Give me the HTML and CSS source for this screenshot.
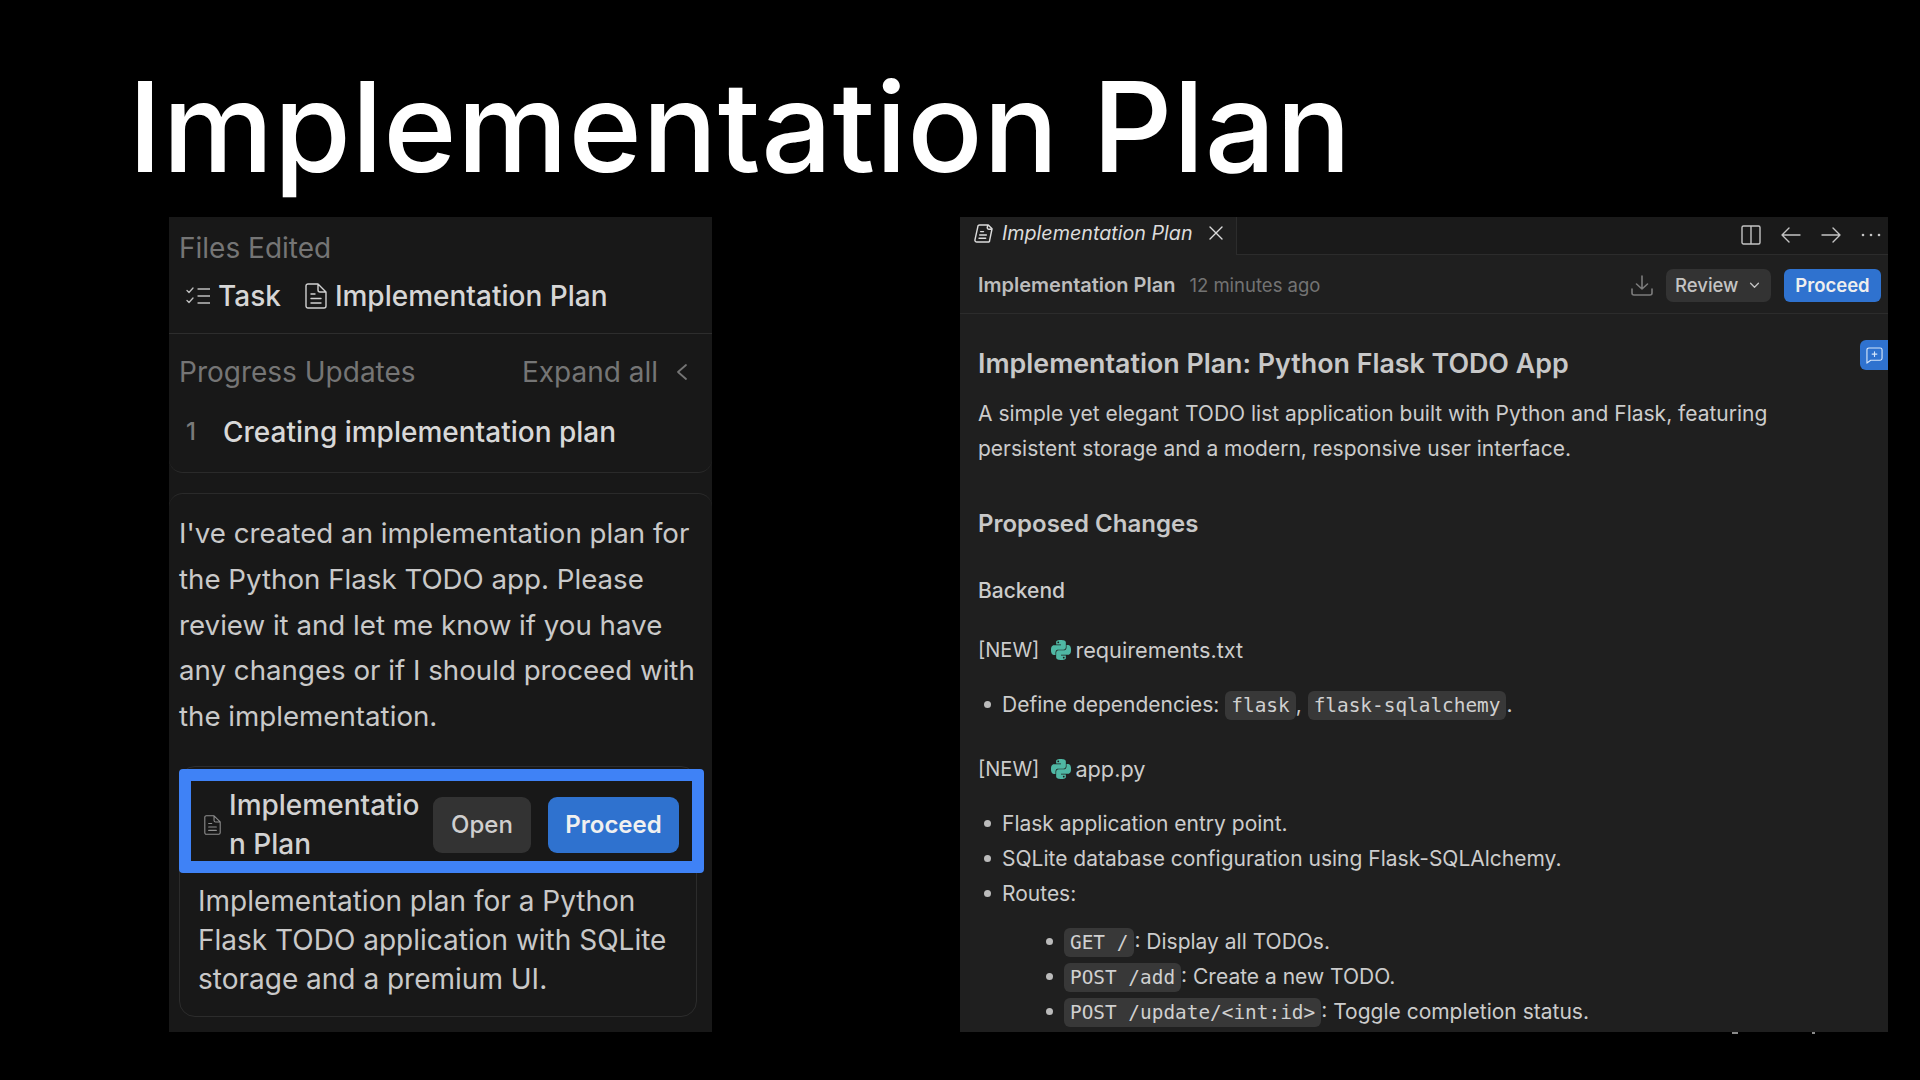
FILE: index.html
```html
<!DOCTYPE html>
<html lang="en">
<head>
<meta charset="utf-8">
<title>Implementation Plan</title>
<link rel="stylesheet" href="styles.css">
</head>
<body>
<svg class="defs" width="0" height="0" aria-hidden="true">
  <symbol id="py" viewBox="0 0 24 24"><path fill="#4fb8a4" d="M14.25.18l.9.2.73.26.59.3.45.32.34.34.25.34.16.33.1.3.04.26.02.2-.01.13V8.5l-.05.63-.13.55-.21.46-.26.38-.3.31-.33.25-.35.19-.35.14-.33.1-.3.07-.26.04-.21.02H8.77l-.69.05-.59.14-.5.22-.41.27-.33.32-.27.35-.2.36-.15.37-.1.35-.07.32-.04.27-.02.21v3.06H3.17l-.21-.03-.28-.07-.32-.12-.35-.18-.36-.26-.36-.36-.35-.46-.32-.59-.28-.73-.21-.88-.14-1.05-.05-1.23.06-1.22.16-1.04.24-.87.32-.71.36-.57.4-.44.42-.33.42-.24.4-.16.36-.1.32-.05.24-.01h.16l.06.01h8.16v-.83H6.18l-.01-2.75-.02-.37.05-.34.11-.31.17-.28.25-.26.31-.23.38-.2.44-.18.51-.15.58-.12.64-.1.71-.06.77-.04.84-.02 1.27.05zm-6.3 1.98l-.23.33-.08.41.08.41.23.34.33.22.41.09.41-.09.33-.22.23-.34.08-.41-.08-.41-.23-.33-.33-.22-.41-.09-.41.09zm13.09 3.95l.28.06.32.12.35.18.36.27.36.35.35.47.32.59.28.73.21.88.14 1.04.05 1.23-.06 1.23-.16 1.04-.24.86-.32.71-.36.57-.4.45-.42.33-.42.24-.4.16-.36.09-.32.05-.24.02-.16-.01h-8.22v.82h5.84l.01 2.76.02.36-.05.34-.11.31-.17.29-.25.25-.31.24-.38.2-.44.17-.51.15-.58.13-.64.09-.71.07-.77.04-.84.01-1.27-.04-1.07-.14-.9-.2-.73-.25-.59-.3-.45-.33-.34-.34-.25-.34-.16-.33-.1-.3-.04-.25-.02-.2.01-.13v-5.34l.05-.64.13-.54.21-.46.26-.38.3-.32.33-.24.35-.2.35-.14.33-.1.3-.06.26-.04.21-.02.13-.01h5.84l.69-.05.59-.14.5-.21.41-.28.33-.32.27-.35.2-.36.15-.36.1-.35.07-.32.04-.28.02-.21V6.07h2.09l.14.01zm-6.47 14.25l-.23.33-.08.41.08.41.23.33.33.23.41.08.41-.08.33-.23.23-.33.08-.41-.08-.41-.23-.33-.33-.23-.41-.08-.41.08z"/></symbol>
  <symbol id="doc" viewBox="0 0 22 26"><path fill="none" stroke="currentColor" stroke-width="1.4" stroke-linejoin="round" stroke-linecap="round" d="M3 1h10l8 8v14a2 2 0 0 1-2 2H3a2 2 0 0 1-2-2V3a2 2 0 0 1 2-2zM13 1v6a2 2 0 0 0 2 2h6M6 11h4M6 15.5h10M6 20h10"/></symbol>
</svg>

<main class="slide">
  <h1 class="title">Implementation Plan</h1>
  <div class="panels">

    <section class="chat">
      <div class="files">
        <div class="muted-line">Files Edited</div>
        <div class="file-row">
          <span class="file-item">
            <svg class="ic-task" viewBox="0 0 24 18" aria-hidden="true"><path fill="none" stroke="currentColor" stroke-width="1.3" stroke-linecap="round" stroke-linejoin="round" d="M1 3.5l2 2 4-4.5M1 13.5l2 2 4-4.5M12 2h12M12 9h12M12 16h12"/></svg>
            Task
          </span>
          <span class="file-item">
            <svg class="ic-doc"><use href="#doc"/></svg>
            Implementation Plan
          </span>
        </div>
      </div>
      <div class="progress">
        <div class="progress-head">
          <span>Progress Updates</span>
          <span class="expand">Expand all
            <svg class="ic-chev" viewBox="0 0 12 18" aria-hidden="true"><path fill="none" stroke="currentColor" stroke-width="1.8" stroke-linecap="round" stroke-linejoin="round" d="M10 2L2 9l8 7"/></svg>
          </span>
        </div>
        <div class="step"><span class="step-no">1</span><span>Creating implementation plan</span></div>
      </div>
      <div class="reply">
        <p class="reply-text">I've created an implementation plan for the Python Flask TODO app. Please review it and let me know if you have any changes or if I should proceed with the implementation.</p>
        <div class="file-card">
          <div class="highlight"></div>
          <div class="card-head">
            <svg class="ic-doc-small"><use href="#doc"/></svg>
            <span class="card-name">Implementation Plan</span>
            <span class="btn btn-open">Open</span>
            <span class="btn btn-go">Proceed</span>
          </div>
          <p class="card-desc">Implementation plan for a Python Flask TODO application with SQLite storage and a premium UI.</p>
        </div>
      </div>
    </section>

    <section class="editor">
      <div class="tabbar">
        <div class="tab">
          <svg class="ic-tab" viewBox="0 0 20 20" aria-hidden="true"><path fill="none" stroke="currentColor" stroke-width="1.5" stroke-linejoin="round" stroke-linecap="round" d="M6 1h9l4 4-2.5 12a2 2 0 0 1-2 2H3a2 2 0 0 1-2-2.4L4 3a2 2 0 0 1 2-2zM14.5 1l-.6 3a1.500 1.500 0 0 0 1.500 1.500H19M7 8h3M6 11.500h7M5.300 15h7"/></svg>
          <span class="tab-label">Implementation Plan</span>
          <svg class="ic-x" viewBox="0 0 14 14" aria-hidden="true"><path fill="none" stroke="currentColor" stroke-width="1.4" stroke-linecap="round" d="M1 1l12 12M13 1L1 13"/></svg>
        </div>
        <div class="tab-tools">
          <svg class="ic-split" viewBox="0 0 20 20" aria-hidden="true"><path fill="none" stroke="currentColor" stroke-width="1.4" d="M2.500 1h15A1.500 1.500 0 0 1 19 2.500v15a1.500 1.500 0 0 1-1.500 1.500h-15A1.500 1.500 0 0 1 1 17.500v-15A1.500 1.500 0 0 1 2.500 1zM10 1v18"/></svg>
          <svg class="ic-arrow" viewBox="0 0 20 16" aria-hidden="true"><path fill="none" stroke="currentColor" stroke-width="1.4" stroke-linecap="round" stroke-linejoin="round" d="M19 8H1M8 1L1 8l7 7"/></svg>
          <svg class="ic-arrow" viewBox="0 0 20 16" aria-hidden="true"><path fill="none" stroke="currentColor" stroke-width="1.4" stroke-linecap="round" stroke-linejoin="round" d="M1 8h18M12 1l7 7-7 7"/></svg>
          <svg class="ic-dots" viewBox="0 0 20 4" aria-hidden="true"><circle cx="2" cy="2" r="1.300" fill="currentColor"/><circle cx="10" cy="2" r="1.300" fill="currentColor"/><circle cx="18" cy="2" r="1.300" fill="currentColor"/></svg>
        </div>
      </div>
      <div class="doc-head">
        <strong class="doc-title">Implementation Plan</strong>
        <span class="doc-time">12 minutes ago</span>
        <svg class="ic-dl" viewBox="0 0 22 21" aria-hidden="true"><path fill="none" stroke="currentColor" stroke-width="1.600" stroke-linecap="round" stroke-linejoin="round" d="M11 1v13M5.500 9l5.500 5 5.500-5M1 14v4a2 2 0 0 0 2 2h16a2 2 0 0 0 2-2v-4"/></svg>
        <span class="review">Review
          <svg class="ic-down" viewBox="0 0 12 8" aria-hidden="true"><path fill="none" stroke="currentColor" stroke-width="1.500" stroke-linecap="round" stroke-linejoin="round" d="M1.500 1.500L6 6l4.500-4.500"/></svg>
        </span>
        <span class="doc-go">Proceed</span>
      </div>
      <div class="doc-body">
        <div class="comment-btn">
          <svg viewBox="0 0 18 18" aria-hidden="true"><path fill="none" stroke="currentColor" stroke-width="1.200" stroke-linejoin="round" stroke-linecap="round" d="M3 1h12a2 2 0 0 1 2 2v9a2 2 0 0 1-2 2H5l-4 3V3a2 2 0 0 1 2-2zM9 5v5M6.500 7.500h5"/></svg>
        </div>
        <h2 class="h-main">Implementation Plan: Python Flask TODO App</h2>
        <p class="lead">A simple yet elegant TODO list application built with Python and Flask, featuring persistent storage and a modern, responsive user interface.</p>
        <h3 class="h-sec">Proposed Changes</h3>
        <h4 class="h-sub">Backend</h4>
        <div class="new-file"><span class="tag">[NEW]</span><svg class="ic-py"><use href="#py"/></svg><span class="fname">requirements.txt</span></div>
        <ul class="list list-one">
          <li>Define dependencies: <code>flask</code>, <code>flask-sqlalchemy</code>.</li>
        </ul>
        <div class="new-file"><span class="tag">[NEW]</span><svg class="ic-py"><use href="#py"/></svg><span class="fname">app.py</span></div>
        <ul class="list list-two">
          <li>Flask application entry point.</li>
          <li>SQLite database configuration using Flask-SQLAlchemy.</li>
          <li>Routes:
            <ul class="sublist">
              <li><code>GET /</code>: Display all TODOs.</li>
              <li><code>POST /add</code>: Create a new TODO.</li>
              <li><code>POST /update/&lt;int:id&gt;</code>: Toggle completion status.</li>
            </ul>
          </li>
        </ul>
      </div>
    </section>

  </div>
</main>
<div class="stub stub-a"></div>
<div class="stub stub-b"></div>
</body>
</html>
```
FILE: styles.css
```css
* { box-sizing: border-box; }
html, body { margin: 0; height: 1080px; background: #000; overflow: hidden; }
body { font-family: Inter, "Noto Sans", sans-serif; position: relative; }
.defs { position: absolute; }
p, h1, h2, h3, h4, ul { margin: 0; padding: 0; }

.slide { display: flex; flex-direction: column; height: 1080px; }
.title {
  font-family: Inter, sans-serif;
  font-weight: 500;
  font-size: 125px;
  line-height: 151px;
  letter-spacing: 0.35px;
  color: #fff;
  padding: 51px 0 0 128px;
  height: 217px;
}
.panels { display: flex; padding-left: 169px; gap: 248px; }

/* left */
.chat { width: 543px; height: 815px; background: #181818; overflow: hidden; flex: none; font-size: 28px; line-height: 40px; }
.files { padding: 11px 10px 0; border-bottom: 1px solid #2d2d2d; height: 117px; }
.muted-line { color: #757575; }
.file-row { display: flex; margin-top: 8px; color: #d6d6d6; gap: 24px; padding-left: 7px; font-weight: 500; }
.file-item { display: flex; align-items: center; gap: 8px; }
.ic-task { width: 24px; height: 18px; color: #bdbdbd; }
.ic-doc { width: 22px; height: 26px; color: #d0d0d0; }
.progress { padding: 18px 0 0 10px; height: 139px; border-bottom: 1px solid #2a2a2a; border-radius: 0 0 14px 14px; }
.progress-head { display: flex; justify-content: space-between; color: #757575; padding-right: 24px; }
.expand { display: flex; align-items: center; gap: 18px; }
.ic-chev { width: 12px; height: 18px; }
.step { display: flex; margin-top: 20px; color: #d8d8d8; font-weight: 500; padding-left: 7px; }
.step-no { width: 37px; color: #7a7a7a; font-size: 24px; }
.reply { margin-top: 20px; border-top: 1px solid #2a2a2a; border-radius: 14px 14px 0 0; padding: 17px 10px 0; position: relative; }
.reply-text { font-size: 27.700px; line-height: 45.800px; color: #c9c9c9; width: 530px; }
.file-card { position: relative; width: 518px; margin: 26px 0 0; border: 1px solid #2c2c2c; border-radius: 16px; height: 251px; font-size: 28px; line-height: 39px; color: #c9c9c9; }
.highlight { position: absolute; top: 2px; left: -1px; width: 525px; height: 104px; border: 12px solid #3f82f6; border-radius: 4px; }
.card-head { display: flex; align-items: center; padding: 19px 0 0 24px; color: #d2d2d2; font-weight: 500; }
.ic-doc-small { width: 17px; height: 20px; color: #8f8f8f; flex: none; margin-right: 8px; }
.card-name { width: 191px; word-break: break-all; flex: none; margin-right: 13px; }
.btn { height: 56px; border-radius: 9px; display: flex; align-items: center; justify-content: center; font-size: 24px; }
.btn-open { width: 98px; background: #333; color: #cfcfcf; margin-right: 17px; }
.btn-go { width: 131px; background: #2f72cf; color: #f0f0f0; font-weight: 600; }
.card-desc { padding: 18px 18px 0; }

/* right */
.editor { width: 928px; height: 815px; background: #1f1f1f; overflow: hidden; flex: none; color: #cccccc; font-size: 21px; }
.tabbar { display: flex; justify-content: space-between; height: 38px; background: #1a1a1a; border-bottom: 1px solid #2c2c2c; }
.tab { width: 277px; height: 38px; background: #1f1f1f; border-right: 1px solid #2c2c2c; display: flex; align-items: center; padding: 0 0 6px 14px; color: #dcdcdc; }
.ic-tab { width: 19px; height: 19px; flex: none; margin-right: 9px; }
.tab-label { font-style: italic; font-size: 19.700px; width: 207px; flex: none; }
.ic-x { width: 14px; height: 14px; }
.tab-tools { display: flex; align-items: center; gap: 20px; padding: 0 7px 2px 0; color: #c4c4c4; }
.ic-split { width: 20px; height: 20px; }
.ic-arrow { width: 20px; height: 16px; }
.ic-dots { width: 20px; height: 4px; }
.doc-head { display: flex; align-items: center; height: 59px; padding: 2px 7px 0 18px; border-bottom: 1px solid #2c2c2c; }
.doc-title { font-weight: 600; font-size: 20px; color: #bdbdbd; }
.doc-time { margin-left: 14px; font-size: 18.500px; color: #737373; flex: 1; }
.ic-dl { width: 22px; height: 21px; color: #7c7c7c; margin-right: 13px; }
.review { width: 105px; height: 33px; background: #333; border-radius: 7px; display: flex; align-items: center; padding-left: 9px; gap: 11px; font-size: 18.500px; font-weight: 500; color: #c4c4c4; margin-right: 13px; }
.ic-down { width: 11px; height: 7px; }
.doc-go { width: 97px; height: 33px; background: #2f72cf; border-radius: 6px; display: flex; align-items: center; justify-content: center; font-size: 18.500px; font-weight: 600; color: #eee; }
.doc-body { position: relative; padding: 30px 18px 0; }
.comment-btn { position: absolute; top: 26px; right: 0; width: 28px; height: 30px; background: #2f72cf; border-radius: 6px 0 0 6px; display: flex; align-items: center; justify-content: center; color: #d5e5fa; }
.comment-btn svg { width: 17px; height: 17px; }
.h-main { font-size: 26.800px; line-height: 38px; font-weight: 600; color: #c8c8c8; }
.lead { margin-top: 14px; line-height: 35px; width: 830px; }
.h-sec { font-size: 24px; line-height: 34px; font-weight: 600; color: #c8c8c8; margin-top: 41px; }
.h-sub { font-size: 21px; line-height: 30px; font-weight: 500; margin-top: 35px; }
.new-file { display: flex; align-items: center; line-height: 30px; margin-top: 29px; }
.tag { font-size: 20px; }
.fname { font-size: 21.700px; }
.ic-py { width: 20px; height: 20px; margin: 0 4px 0 12px; flex: none; }
.list { list-style: none; }
.list > li, .sublist > li { position: relative; line-height: 35px; }
.list > li { padding-left: 24px; }
.list > li::before, .sublist > li::before { content: ""; position: absolute; top: 14px; width: 7px; height: 7px; border-radius: 50%; background: #bbb; }
.list > li::before { left: 6px; }
.list-one { margin-top: 22px; }
.list-one + .new-file { margin-top: 31px; }
.list-two { margin-top: 22px; }
.sublist { list-style: none; margin-top: 13px; padding-left: 62px; }
.sublist > li { height: 35px; }
.sublist > li::before { left: -18px; top: 14px; }
code { font-family: "DejaVu Sans Mono", monospace; font-size: 19.400px; background: #383838; border-radius: 6px; padding: 3px 6px; color: #d0d0d0; }

.stub { position: absolute; top: 1032px; height: 2px; background: #8a8a8a; }
.stub-a { left: 1732px; width: 6px; }
.stub-b { left: 1812px; width: 3px; }
```
